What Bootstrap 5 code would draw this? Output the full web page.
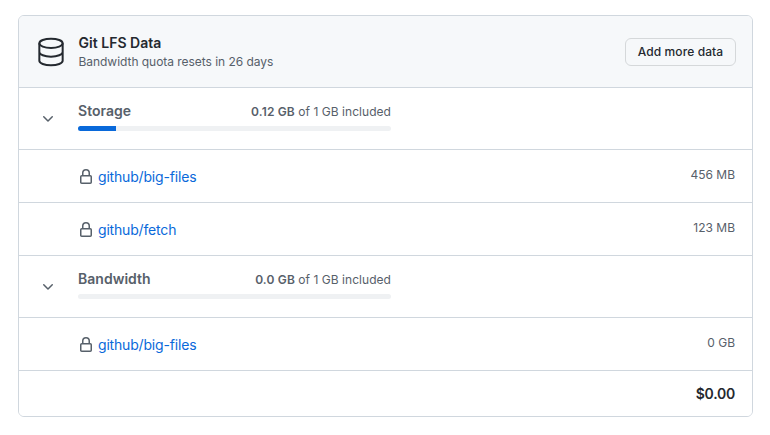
<!DOCTYPE html>
<html lang="en">
<head>
<meta charset="utf-8">
<meta name="viewport" content="width=device-width, initial-scale=1">
<title>Git LFS Data</title>
<link href="https://cdn.jsdelivr.net/npm/bootstrap@5.3.0/dist/css/bootstrap.min.css" rel="stylesheet">
<style>
body{font-family:Inter,"Liberation Sans",sans-serif;font-size:14px;line-height:21px;color:#24292f;background:#fff}
.billing{--bs-card-border-color:#d0d7de;--bs-card-border-radius:6px;--bs-card-inner-border-radius:5px;--bs-card-cap-bg:#f6f8fa;width:735px;margin:15px 0 0 18px;border-color:#d0d7de}
.billing-head{height:72px;padding:0 16px;color:#24292f;border-color:#d0d7de}
.head-text{margin-left:11.5px}
.billing .list-group-item{padding:0 17px 0 0;border-color:#d0d7de;color:#57606a;background:#fff}
.gutter{width:59px;flex:none}
.gutter svg{margin-right:1px}
.title{font-size:14px;font-weight:600;line-height:20px;letter-spacing:.02px}
.note{font-size:12px;line-height:18px;color:#57606a;letter-spacing:-.04px}
.btn-data{--bs-btn-font-size:12px;--bs-btn-line-height:18px;--bs-btn-font-weight:500;--bs-btn-padding-x:0;--bs-btn-padding-y:4px;--bs-btn-border-radius:6px;--bs-btn-color:#24292f;--bs-btn-bg:#f6f8fa;--bs-btn-border-color:#d5d8da;width:111px;height:28px;letter-spacing:.1px}
.usage-row{height:62px}
.repo-row{height:53px}
.total-row{height:45px}
.total{letter-spacing:-.25px;color:#24292f}
.meter-col{width:313px;margin-bottom:6px}
.meter{--bs-progress-height:5px;--bs-progress-bg:#eff1f3;--bs-progress-bar-bg:#0969da;--bs-progress-border-radius:3px;margin-top:4px}
.included{font-size:12px;letter-spacing:.04px}
.included b{letter-spacing:.15px}
.lock-icon{margin-top:1px}
.usage-row .gutter svg{margin-bottom:1px}
.repo-link{color:#0969da;font-size:14px;letter-spacing:-.18px}
.amount{font-size:12px;margin-bottom:3px}
svg{display:block;fill:currentColor;flex:none}
b{font-weight:600}
</style>
</head>
<body>
<svg class="d-none">
  <symbol id="lock" viewBox="0 0 16 16"><path fill-rule="evenodd" d="M4 4v2h-.25A1.75 1.75 0 002 7.75v5.5c0 .966.784 1.75 1.75 1.75h8.5A1.75 1.75 0 0014 13.25v-5.5A1.75 1.75 0 0012.25 6H12V4a4 4 0 10-8 0zm6.5 2V4a2.5 2.5 0 10-5 0v2h5zM12 7.5h.25a.25.25 0 01.25.25v5.5a.25.25 0 01-.25.25h-8.5a.25.25 0 01-.25-.25v-5.5a.25.25 0 01.25-.25H12z"/></symbol>
  <symbol id="chevron" viewBox="0 0 16 16"><path fill-rule="evenodd" d="M12.78 6.22a.75.75 0 010 1.06l-4.25 4.25a.75.75 0 01-1.06 0L3.22 7.28a.75.75 0 011.06-1.06L8 9.94l3.72-3.72a.75.75 0 011.06 0z"/></symbol>
</svg>
<main class="card billing">
  <div class="card-header billing-head d-flex align-items-center">
    <svg width="32" height="32" viewBox="0 0 24 24"><g fill="none" stroke="currentColor" stroke-width="1.5"><ellipse cx="12" cy="5.5" rx="8.75" ry="3.5"/><path d="M3.25 5.5v13c0 1.93 3.9 3.5 8.75 3.5s8.75-1.57 8.75-3.5v-13M3.25 12c0 1.93 3.9 3.5 8.75 3.5s8.75-1.57 8.75-3.5"/></g></svg>
    <div class="head-text flex-grow-1">
      <div class="title">Git LFS Data</div>
      <div class="note">Bandwidth quota resets in 26 days</div>
    </div>
    <button type="button" class="btn btn-data">Add more data</button>
  </div>
  <div class="list-group list-group-flush">
    <div class="list-group-item usage-row d-flex align-items-center">
      <div class="gutter d-flex justify-content-center"><svg width="16" height="16"><use href="#chevron"/></svg></div>
      <div class="meter-col">
        <div class="d-flex justify-content-between align-items-center"><span class="title">Storage</span><span class="included"><b>0.12 GB</b> of 1 GB included</span></div>
        <div class="progress meter"><div class="progress-bar" style="width:12%"></div></div>
      </div>
    </div>
    <div class="list-group-item repo-row d-flex align-items-center">
      <div class="gutter"></div>
      <svg class="lock-icon" width="16" height="16"><use href="#lock"/></svg>
      <a href="#" class="repo-link ms-1 text-decoration-none">github/big-files</a>
      <span class="amount ms-auto">456 MB</span>
    </div>
    <div class="list-group-item repo-row d-flex align-items-center">
      <div class="gutter"></div>
      <svg class="lock-icon" width="16" height="16"><use href="#lock"/></svg>
      <a href="#" class="repo-link ms-1 text-decoration-none">github/fetch</a>
      <span class="amount ms-auto">123 MB</span>
    </div>
    <div class="list-group-item usage-row d-flex align-items-center">
      <div class="gutter d-flex justify-content-center"><svg width="16" height="16"><use href="#chevron"/></svg></div>
      <div class="meter-col">
        <div class="d-flex justify-content-between align-items-center"><span class="title">Bandwidth</span><span class="included"><b>0.0 GB</b> of 1 GB included</span></div>
        <div class="progress meter"><div class="progress-bar" style="width:0%"></div></div>
      </div>
    </div>
    <div class="list-group-item repo-row d-flex align-items-center">
      <div class="gutter"></div>
      <svg class="lock-icon" width="16" height="16"><use href="#lock"/></svg>
      <a href="#" class="repo-link ms-1 text-decoration-none">github/big-files</a>
      <span class="amount ms-auto">0 GB</span>
    </div>
    <div class="list-group-item total-row d-flex align-items-center justify-content-end">
      <span class="title total">$0.00</span>
    </div>
  </div>
</main>
<script src="https://cdn.jsdelivr.net/npm/bootstrap@5.3.0/dist/js/bootstrap.bundle.min.js"></script>
</body>
</html>
